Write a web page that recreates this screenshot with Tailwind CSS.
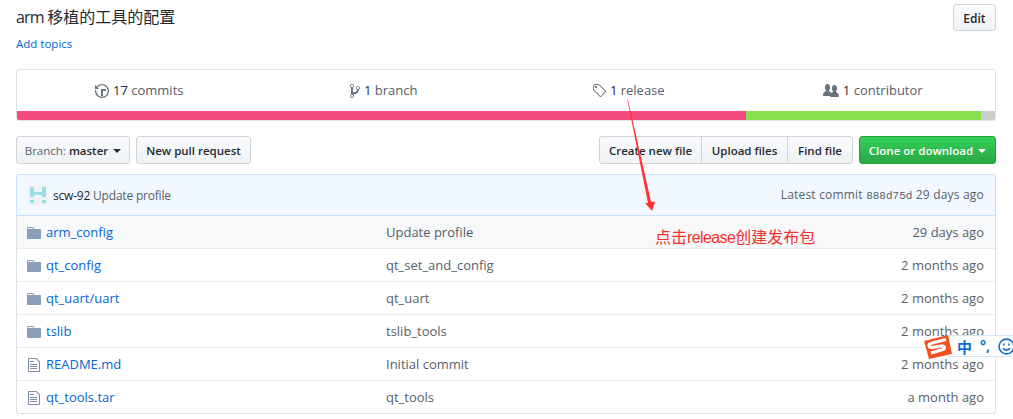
<!DOCTYPE html>
<html lang="en">
<head>
    <meta charset="UTF-8">
    <meta name="viewport" content="width=device-width, initial-scale=1.0">
    <title>arm config</title>
    <script src="https://cdn.jsdelivr.net/npm/@tailwindcss/browser@4"></script>
</head>
<body class="bg-white">
<div class="relative h-[419px] overflow-hidden pl-4 pr-[17px] pt-1 font-['Open_Sans','Noto_Sans_CJK_SC',sans-serif] text-[13px] text-[#586069]">

    <!-- Description and topics -->
    <div class="flex justify-between items-start h-[27px]">
        <div class="text-base leading-[26px] text-[#24292e]"><span class="tracking-[-0.8px]">arm </span>移植的工具的配置</div>
        <button class="h-[27px] w-[43px] pt-[2px] rounded-[3px] border border-[#d1d5da] bg-gradient-to-b from-[#fafbfc] to-[#eff3f6] text-xs font-semibold text-[#24292e]">Edit</button>
    </div>
    <a href="#" class="block mt-[5px] h-[16px] text-[11.5px] leading-[16px] text-[#0366d6]">Add topics</a>

    <!-- Numbers summary -->
    <div class="mt-[17px] h-[52px] rounded-[3px] border border-[#dfe2e5] overflow-hidden flex flex-col">
        <div class="flex-1 grid grid-cols-4 pt-[1px]">
            <div class="flex items-center justify-center gap-1">
                <svg class="w-[14px] h-4 fill-[#6a737d]" viewBox="0 0 14 16"><path d="M8 13H6V6h5v2H8v5zM7 1C4.81 1 2.87 2.02 1.59 3.59L0 2v4h4L2.5 4.5C3.55 3.17 5.17 2.3 7 2.3c3.14 0 5.7 2.56 5.7 5.7s-2.56 5.7-5.7 5.7A5.71 5.71 0 0 1 1.3 8c0-.34.03-.67.09-1H.08C.03 7.33 0 7.66 0 8c0 3.86 3.14 7 7 7s7-3.14 7-7-3.14-7-7-7z"/></svg>
                <span><span class="font-medium text-[#24292e]">17</span> commits</span>
            </div>
            <div class="flex items-center justify-center gap-1">
                <svg class="w-[10px] h-4 fill-[#6a737d]" viewBox="0 0 10 16"><path d="M10 5c0-1.11-.89-2-2-2a1.993 1.993 0 0 0-1 3.72v.3c-.02.52-.23.98-.63 1.38-.4.4-.86.61-1.38.63-.83.02-1.48.16-2 .45V4.72a1.993 1.993 0 0 0-1-3.72C.88 1 0 1.89 0 3a2 2 0 0 0 1 1.72v6.56c-.59.35-1 .99-1 1.72 0 1.11.89 2 2 2 1.11 0 2-.89 2-2 0-.53-.2-1-.53-1.36.09-.06.48-.41.59-.47.25-.11.56-.17.94-.17 1.05-.05 1.95-.45 2.75-1.25S8.95 7.77 9 6.73h-.02C9.59 6.37 10 5.73 10 5zM2 1.8c.66 0 1.2.55 1.2 1.2 0 .65-.55 1.2-1.2 1.2C1.35 4.2.8 3.65.8 3c0-.65.55-1.2 1.2-1.2zm0 12.41c-.66 0-1.2-.55-1.2-1.2 0-.65.55-1.2 1.2-1.2.65 0 1.2.55 1.2 1.2 0 .65-.55 1.2-1.2 1.2zm6-8c-.66 0-1.2-.55-1.2-1.2 0-.65.55-1.2 1.2-1.2.65 0 1.2.55 1.2 1.2 0 .65-.55 1.2-1.2 1.2z"/></svg>
                <span><span class="font-medium text-[#24292e]">1</span> branch</span>
            </div>
            <div class="flex items-center justify-center gap-1">
                <svg class="w-[14px] h-4 fill-[#6a737d]" viewBox="0 0 14 16"><path d="M7.73 1.73C7.26 1.26 6.62 1 5.96 1H3.5C2.13 1 1 2.13 1 3.5v2.47c0 .66.27 1.3.73 1.77l6.06 6.06c.39.39 1.02.39 1.41 0l4.59-4.59a.996.996 0 0 0 0-1.41L7.73 1.73zM2.38 7.09c-.31-.3-.47-.7-.47-1.13V3.5c0-.88.72-1.59 1.59-1.59h2.47c.42 0 .83.16 1.13.47l6.14 6.13-4.73 4.73-6.13-6.15zM3.01 3h2v2H3V3h.01z"/></svg>
                <span><span class="font-medium text-[#24292e]">1</span> release</span>
            </div>
            <div class="flex items-center justify-center gap-1">
                <svg class="w-4 h-4 fill-[#6a737d]" viewBox="0 0 16 16"><path d="M16 12.999c0 .439-.45 1-1 1H7.995c-.539 0-.994-.447-.995-.999H1c-.54 0-1-.561-1-1 0-2.634 3-4 3-4s.229-.409 0-1c-.841-.621-1.058-.59-1-3 .058-2.419 1.367-3 2.5-3s2.442.58 2.5 3c.058 2.41-.159 2.379-1 3-.229.59 0 1 0 1s1.549.711 2.42 2.088C9.196 9.369 10 8.999 10 8.999s.229-.409 0-1c-.841-.62-1.058-.59-1-3 .058-2.419 1.367-3 2.5-3s2.437.581 2.495 3c.059 2.41-.158 2.38-1 3-.229.59 0 1 0 1s3.005 1.366 3.005 4z"/></svg>
                <span><span class="font-medium text-[#24292e]">1</span> contributor</span>
            </div>
        </div>
        <div class="h-[9px] flex">
            <div class="w-[729px] bg-[#f34b7d]"></div>
            <div class="w-[235px] bg-[#89e051]"></div>
            <div class="flex-1 bg-[#ccc]"></div>
        </div>
    </div>

    <!-- File navigation -->
    <div class="mt-[15px] flex justify-between h-[28px] text-[11.5px] font-semibold text-[#24292e]">
        <div class="flex gap-[6px]">
            <button class="h-[28px] w-[114px] pt-[2px] rounded-[3px] border border-[#d1d5da] bg-gradient-to-b from-[#fafbfc] to-[#eff3f6] flex items-center justify-center gap-[5px]">
                <span><span class="font-normal text-[#586069]">Branch:</span> master</span>
                <span class="w-0 h-0 border-x-[4px] border-x-transparent border-t-[4px] border-t-[#24292e]"></span>
            </button>
            <button class="h-[28px] w-[115px] pt-[2px] rounded-[3px] border border-[#d1d5da] bg-gradient-to-b from-[#fafbfc] to-[#eff3f6]">New pull request</button>
        </div>
        <div class="flex gap-[6px]">
            <div class="flex">
                <button class="h-[28px] w-[103px] pt-[2px] rounded-l-[3px] border border-[#d1d5da] bg-gradient-to-b from-[#fafbfc] to-[#eff3f6]">Create new file</button>
                <button class="h-[28px] w-[87px] pt-[2px] -ml-px border border-[#d1d5da] bg-gradient-to-b from-[#fafbfc] to-[#eff3f6]">Upload files</button>
                <button class="h-[28px] w-[66px] pt-[2px] -ml-px rounded-r-[3px] border border-[#d1d5da] bg-gradient-to-b from-[#fafbfc] to-[#eff3f6]">Find file</button>
            </div>
            <button class="h-[28px] w-[137px] pt-[2px] rounded-[3px] border border-[#269f42] bg-gradient-to-b from-[#34d058] to-[#28a745] text-white flex items-center justify-center gap-[5px]">
                <span>Clone or download</span>
                <span class="w-0 h-0 border-x-[4px] border-x-transparent border-t-[4px] border-t-white"></span>
            </button>
        </div>
    </div>

    <!-- Commit tease -->
    <div class="mt-[10px] h-[42px] pt-[1px] rounded-t-[3px] border border-[#c8e1ff] bg-[#f1f8ff] flex items-center justify-between pl-[11px] pr-[11px] text-xs">
        <div class="flex items-center gap-[5px] -mt-[1px]">
            <svg class="w-5 h-5 rounded-[3px]" viewBox="0 0 20 20"><rect width="20" height="20" fill="#f0f3f3"/><path d="M2 2h4v5h8V2h4v10h-4V10H6v2H2zM2 15h4v3H2zM14 15h4v3h-4z" fill="#9cdde8"/></svg>
            <span class="tracking-[-0.2px] pt-[1px]"><span class="font-medium text-[#24292e]">scw-92</span> Update profile</span>
        </div>
        <div class="tracking-[0.2px]">Latest commit <span class="font-['Liberation_Mono',monospace] text-[11px] tracking-normal">888d75d</span> 29 days ago</div>
    </div>

    <!-- File rows -->
    <div class="border-x border-b border-[#dfe2e5] rounded-b-[3px]">
        <div class="h-[33px] pt-[1px] grid grid-cols-[359px_1fr_auto] items-center pl-[10px] pr-[11px] bg-[#f6f8fa] border-b border-[#eaecef]">
            <div class="flex items-center gap-[5px]"><svg class="w-[14px] h-4 fill-[#8aa0b8]" viewBox="0 0 14 16"><path d="M13 4H7V3c0-.66-.31-1-1-1H1c-.55 0-1 .45-1 1v10c0 .55.45 1 1 1h12c.55 0 1-.45 1-1V5c0-.55-.45-1-1-1zM6 4H1V3h5v1z"/></svg><a href="#" class="text-[#0366d6]">arm_config</a></div>
            <div>Update profile</div><div>29 days ago</div>
        </div>
        <div class="h-[33px] pt-[1px] grid grid-cols-[359px_1fr_auto] items-center pl-[10px] pr-[11px] border-b border-[#eaecef]">
            <div class="flex items-center gap-[5px]"><svg class="w-[14px] h-4 fill-[#8aa0b8]" viewBox="0 0 14 16"><path d="M13 4H7V3c0-.66-.31-1-1-1H1c-.55 0-1 .45-1 1v10c0 .55.45 1 1 1h12c.55 0 1-.45 1-1V5c0-.55-.45-1-1-1zM6 4H1V3h5v1z"/></svg><a href="#" class="text-[#0366d6]">qt_config</a></div>
            <div>qt_set_and_config</div><div>2 months ago</div>
        </div>
        <div class="h-[33px] pt-[1px] grid grid-cols-[359px_1fr_auto] items-center pl-[10px] pr-[11px] border-b border-[#eaecef]">
            <div class="flex items-center gap-[5px]"><svg class="w-[14px] h-4 fill-[#8aa0b8]" viewBox="0 0 14 16"><path d="M13 4H7V3c0-.66-.31-1-1-1H1c-.55 0-1 .45-1 1v10c0 .55.45 1 1 1h12c.55 0 1-.45 1-1V5c0-.55-.45-1-1-1zM6 4H1V3h5v1z"/></svg><a href="#" class="text-[#0366d6]">qt_uart/uart</a></div>
            <div>qt_uart</div><div>2 months ago</div>
        </div>
        <div class="h-[33px] pt-[1px] grid grid-cols-[359px_1fr_auto] items-center pl-[10px] pr-[11px] border-b border-[#eaecef]">
            <div class="flex items-center gap-[5px]"><svg class="w-[14px] h-4 fill-[#8aa0b8]" viewBox="0 0 14 16"><path d="M13 4H7V3c0-.66-.31-1-1-1H1c-.55 0-1 .45-1 1v10c0 .55.45 1 1 1h12c.55 0 1-.45 1-1V5c0-.55-.45-1-1-1zM6 4H1V3h5v1z"/></svg><a href="#" class="text-[#0366d6]">tslib</a></div>
            <div>tslib_tools</div><div>2 months ago</div>
        </div>
        <div class="h-[33px] pt-[1px] grid grid-cols-[359px_1fr_auto] items-center pl-[10px] pr-[11px] border-b border-[#eaecef]">
            <div class="flex items-center gap-[5px]"><svg class="w-[14px] h-4 fill-[#7f8ea3]" viewBox="0 0 12 16"><path d="M6 5H2V4h4v1zM2 8h7V7H2v1zm0 2h7V9H2v1zm0 2h7v-1H2v1zm10-7.5V14c0 .55-.45 1-1 1H1c-.55 0-1-.45-1-1V2c0-.55.45-1 1-1h7.5L12 4.5zM11 5L8 2H1v12h10V5z"/></svg><a href="#" class="text-[#0366d6]">README.md</a></div>
            <div>Initial commit</div><div>2 months ago</div>
        </div>
        <div class="h-[32px] pt-[1px] grid grid-cols-[359px_1fr_auto] items-center pl-[10px] pr-[11px]">
            <div class="flex items-center gap-[5px]"><svg class="w-[14px] h-4 fill-[#7f8ea3]" viewBox="0 0 12 16"><path d="M6 5H2V4h4v1zM2 8h7V7H2v1zm0 2h7V9H2v1zm0 2h7v-1H2v1zm10-7.5V14c0 .55-.45 1-1 1H1c-.55 0-1-.45-1-1V2c0-.55.45-1 1-1h7.5L12 4.5zM11 5L8 2H1v12h10V5z"/></svg><a href="#" class="text-[#0366d6]">qt_tools.tar</a></div>
            <div>qt_tools</div><div>a month ago</div>
        </div>
    </div>

    <!-- Red annotation drawn over the screenshot -->
    <svg class="absolute left-[620px] top-[95px] w-[45px] h-[125px]" viewBox="0 0 45 125">
        <polygon points="7.4,5 8,5 31,106.5 35,107 32,116 25,108 28,108" fill="#ff3333"/>
    </svg>
    <div class="absolute left-[655px] top-[226px] text-base leading-6 text-[#f5302a] font-['Liberation_Sans','Noto_Sans_CJK_SC',sans-serif]">点击<span class="tracking-[-0.6px]">release</span>创建发布包</div>

    <!-- Input method toolbar -->
    <div class="absolute left-[948px] top-[335px] w-[70px] h-[22px] bg-white border-y border-[#d5e4f3] flex items-center pl-[9px]">
        <span class="font-['Noto_Sans_CJK_SC',sans-serif] text-[15px] font-bold leading-none text-[#0f6fc6]">中</span>
        <span class="ml-[8px] text-sm font-bold leading-none text-[#0f6fc6]">°,</span>
        <svg class="ml-[8px] w-[17px] h-[17px] shrink-0" viewBox="0 0 17 17" fill="none" stroke="#0f6fc6" stroke-width="1.6"><circle cx="8.5" cy="8.5" r="7.4"/><path d="M5 10.3c1.7 2.4 5.3 2.4 7 0"/><path d="M6 5.5v2M11 5.5v2"/></svg>
    </div>
    <svg class="absolute left-[923px] top-[333px] w-[30px] h-[28px]" viewBox="0 0 30 28">
        <polygon points="1,8 25,2 29,21 6,26" fill="#f4511e"/>
        <path d="M23 6.5L9 10c-4.5 1.2-3.5 5 1 4.3l8-1.3c4-.6 4.5 2.8 1 3.8L8 20" fill="none" stroke="#fff" stroke-width="3.2"/>
    </svg>
</div>
</body>
</html>
